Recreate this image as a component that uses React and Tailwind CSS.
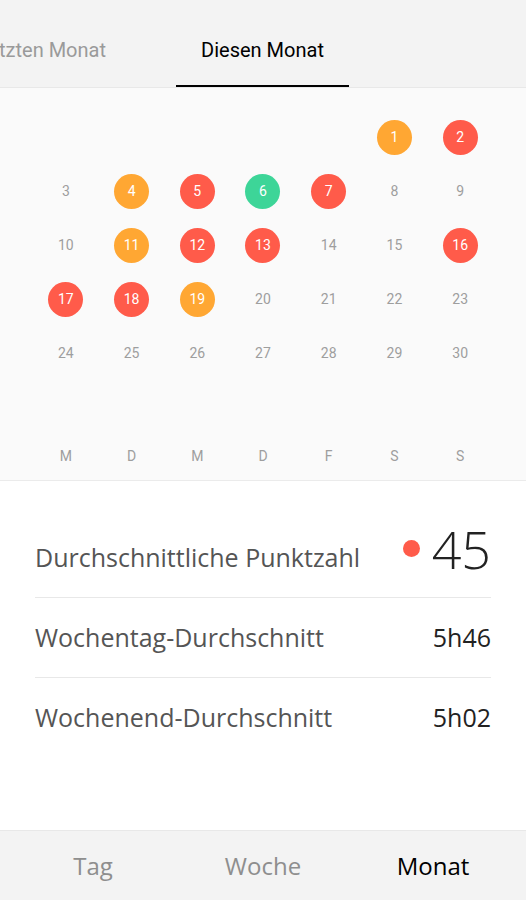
// Sleep stats — monthly view

const ORANGE = 'bg-[#ffa733]';
const RED = 'bg-[#ff5b4a]';
const GREEN = 'bg-[#3dd598]';

// day -> score colour (no entry = plain number)
const scores = {
  1: ORANGE, 2: RED, 4: ORANGE, 5: RED, 6: GREEN, 7: RED,
  11: ORANGE, 12: RED, 13: RED, 16: RED, 17: RED, 18: RED, 19: ORANGE,
};

// month starts on a Saturday
const cells = [...Array(5).fill(null), ...Array.from({ length: 30 }, (_, i) => i + 1)];
const weekdays = ['M', 'D', 'M', 'D', 'F', 'S', 'S'];

const stats = [
  { label: 'Wochentag-Durchschnitt', value: '5h46' },
  { label: 'Wochenend-Durchschnitt', value: '5h02' },
];

const roboto = { fontFamily: 'Roboto, "Liberation Sans", sans-serif' };
const pure = { fontFamily: '"Open Sans", "Noto Sans", sans-serif' };

export default function App() {
  return (
    <div className="w-[526px] h-[900px] overflow-hidden flex flex-col bg-white" style={roboto}>
      {/* Month tabs */}
      <div className="h-[88px] shrink-0 bg-[#f3f3f3] border-b border-[#e8e8e8] overflow-hidden">
        <div className="flex h-full -ml-[78px]">
          <div className="w-[227px] shrink-0 flex items-center justify-end pr-[43px] pt-[12px] text-[20px] text-[#9a9a9a] whitespace-nowrap">
            Letzten Monat
          </div>
          <div className="w-[227px] shrink-0 relative flex items-center justify-center pt-[12px] text-[20px] text-black">
            Diesen Monat
            <span className="absolute bottom-0 left-[27px] w-[173px] h-[2px] bg-black" />
          </div>
          <div className="w-[227px] shrink-0" />
        </div>
      </div>

      {/* Calendar */}
      <div className="h-[393px] shrink-0 bg-[#fafafa] border-b border-[#ebebeb] px-[33px] pt-[22px]">
        <div className="grid grid-cols-7">
          {cells.map((d, i) => (
            <div key={i} className="h-[54px] flex items-center justify-center">
              {d && (scores[d] ? (
                <span className={`w-[35px] h-[35px] rounded-full flex items-center justify-center text-[14px] text-white ${scores[d]}`}>
                  {d}
                </span>
              ) : (
                <span className="text-[14px] text-[#9e9e9e]">{d}</span>
              ))}
            </div>
          ))}
        </div>
        <div className="grid grid-cols-7 mt-[66px]">
          {weekdays.map((w, i) => (
            <div key={i} className="h-[20px] flex items-center justify-center text-[14px] text-[#9e9e9e]">
              {w}
            </div>
          ))}
        </div>
      </div>

      {/* Stats */}
      <div className="flex-1 bg-white px-[35px] pt-[37px]" style={pure}>
        <div className="h-[80px] flex items-center justify-between border-b border-[#e8e8e8]">
          <span className="text-[25px] text-[#555]">Durchschnittliche Punktzahl</span>
          <div className="flex items-center gap-[12px] mb-[18px]">
            <span className="w-[17px] h-[17px] rounded-full bg-[#ff5b4a]" />
            <span className="text-[52px] font-light leading-none text-[#222]">45</span>
          </div>
        </div>
        {stats.map((s) => (
          <div key={s.label} className="h-[80px] flex items-center justify-between border-b border-[#e8e8e8] last:border-b-0">
            <span className="text-[25px] text-[#555]">{s.label}</span>
            <span className="text-[25px] text-[#222]">{s.value}</span>
          </div>
        ))}
      </div>

      {/* Period switch */}
      <div className="h-[70px] shrink-0 bg-[#f3f3f3] border-t border-[#e8e8e8] grid grid-cols-3 px-2" style={pure}>
        <div className="flex items-center justify-center text-[24px] text-[#8e8e8e]">Tag</div>
        <div className="flex items-center justify-center text-[24px] text-[#8e8e8e]">Woche</div>
        <div className="flex items-center justify-center text-[24px] text-black">Monat</div>
      </div>
    </div>
  );
}
